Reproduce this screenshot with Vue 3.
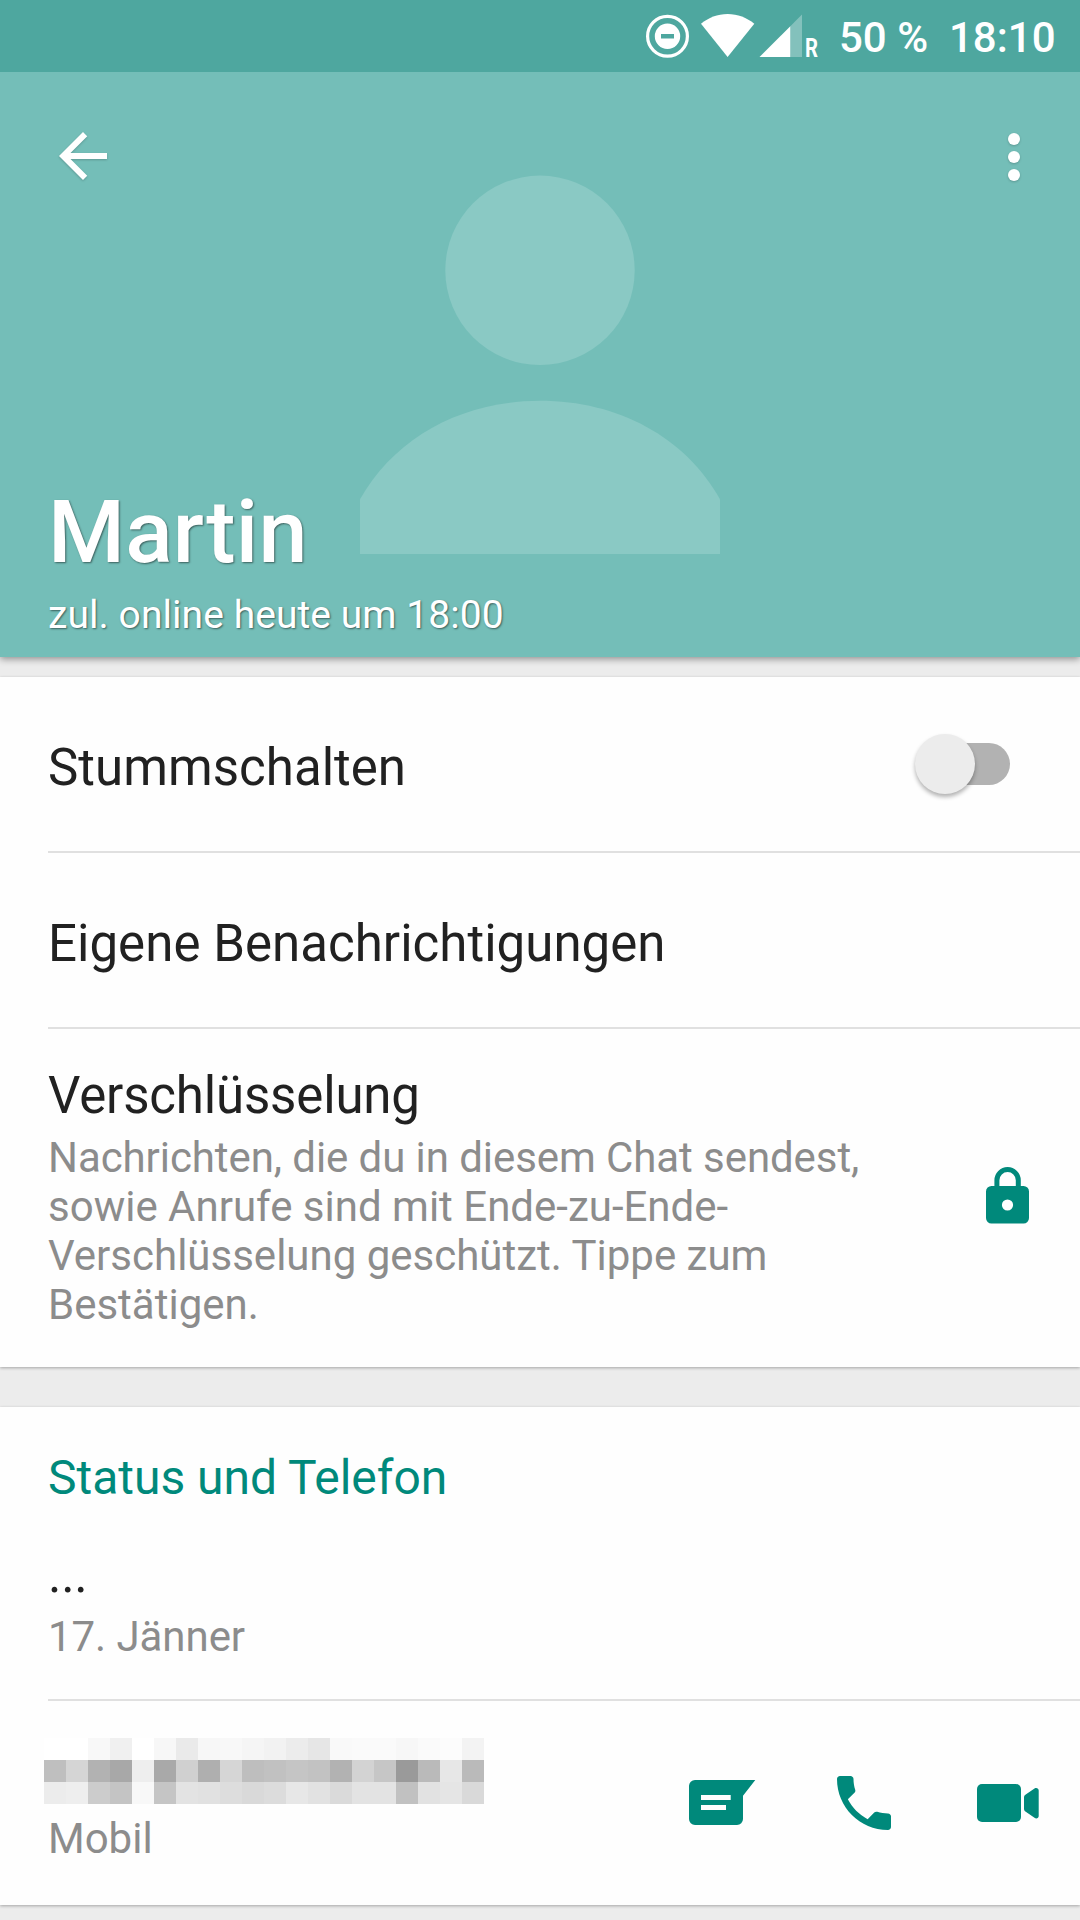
<template>
  <div class="contact">
    <div class="status-bar">
      <svg class="dnd" width="44" height="44" viewBox="0 0 44 44">
        <circle cx="21.5" cy="22.3" r="19.9" fill="none" stroke="#fff" stroke-width="3.2" />
        <path
          fill="#fff"
          fill-rule="evenodd"
          d="M21.5 9.6a12.7 12.7 0 1 0 0 25.4a12.7 12.7 0 1 0 0-25.4zM15 20h13v4.4H15z"
        />
      </svg>
      <svg class="wifi" width="54" height="44" viewBox="0 0 54 44">
        <path fill="#fff" d="M0 9.8C7.5 3.6 16.5 0 26.6 0S45.8 3.6 53.3 9.8L26.6 43z" />
      </svg>
      <svg class="signal" width="44" height="44" viewBox="0 0 44 44">
        <path fill="#fff" fill-opacity="0.3" d="M43 0.5V43H31.3V12.2z" />
        <path fill="#fff" d="M0.5 43L31.3 12.2V43z" />
      </svg>
      <svg class="roaming" width="18" height="54" viewBox="0 0 18 54">
        <text x="0" y="43" textLength="13" lengthAdjust="spacingAndGlyphs">R</text>
      </svg>
      <span class="battery">50 %</span>
      <span class="clock">18:10</span>
    </div>

    <header class="header">
      <svg class="avatar" width="360" height="380" viewBox="0 0 360 380">
        <circle cx="180" cy="95.3" r="94.7" />
        <path d="M0 324.3C35 262 102 225.8 180 225.8S325 262 360 324.3V379H0z" />
      </svg>
      <div class="toolbar">
        <svg class="tool" width="72" height="72" viewBox="0 0 24 24">
          <path d="M20 11H7.83l5.59-5.59L12 4l-8 8 8 8 1.41-1.41L7.83 13H20v-2z" />
        </svg>
        <svg class="tool" width="72" height="72" viewBox="0 0 72 72">
          <circle v-for="y in [19, 37, 55]" :key="y" cx="36" :cy="y" r="6" />
        </svg>
      </div>
      <div class="who">
        <h1>Martin</h1>
        <p>zul. online heute um 18:00</p>
      </div>
    </header>

    <section class="card settings">
      <div class="row" @click="muted = !muted">
        <span class="label">Stummschalten</span>
        <span class="switch" :class="{ on: muted }"><i></i></span>
      </div>
      <div class="row">
        <span class="label">Eigene Benachrichtigungen</span>
      </div>
      <div class="row encryption">
        <div>
          <div class="label">Verschlüsselung</div>
          <p class="sub">
            Nachrichten, die du in diesem Chat sendest,<br />sowie Anrufe sind mit Ende-zu-Ende-<br />Verschlüsselung
            geschützt. Tippe zum<br />Bestätigen.
          </p>
        </div>
        <svg class="lock" width="43" height="57" viewBox="0 0 43 57">
          <path fill="none" stroke="#00897b" stroke-width="5" d="M10.9 21V13.3a10.7 10.7 0 0 1 21.4 0V21" />
          <path
            fill="#00897b"
            fill-rule="evenodd"
            d="M5.5 19h32a5.5 5.5 0 0 1 5.5 5.5v26.5a5.5 5.5 0 0 1-5.5 5.5h-32a5.5 5.5 0 0 1-5.5-5.5V24.5a5.5 5.5 0 0 1 5.5-5.5zM21.5 32.4a5.6 5.6 0 1 0 0 11.2a5.6 5.6 0 1 0 0-11.2z"
          />
        </svg>
      </div>
    </section>

    <section class="card info">
      <div class="about">
        <h2>Status und Telefon</h2>
        <div class="label">...</div>
        <p class="sub">17. Jänner</p>
      </div>
      <div class="phone">
        <div class="number">
          <!-- 号码打码 -->
          <div class="mosaic">
            <i v-for="(g, i) in mosaic" :key="i" :style="{ background: gray(g) }"></i>
          </div>
          <p class="sub">Mobil</p>
        </div>
        <div class="actions">
          <svg width="72" height="72" viewBox="0 0 72 72">
            <path
              fill-rule="evenodd"
              d="M11 13H71.3L59 28.7V52a6 6 0 0 1-6 6H11a6 6 0 0 1-6-6V19a6 6 0 0 1 6-6zM17 28v5h29.7v-5zM17 38v5h25v-5z"
            />
          </svg>
          <svg width="72" height="72" viewBox="0 0 24 24">
            <path
              d="M6.62 10.79c1.44 2.83 3.76 5.14 6.59 6.59l2.2-2.2c.27-.27.67-.36 1.02-.24 1.12.37 2.33.57 3.57.57.55 0 1 .45 1 1V20c0 .55-.45 1-1 1-9.39 0-17-7.61-17-17 0-.55.45-1 1-1h3.5c.55 0 1 .45 1 1 0 1.25.2 2.45.57 3.57.11.35.03.74-.25 1.02l-2.2 2.2z"
            />
          </svg>
          <svg width="72" height="72" viewBox="0 0 72 72">
            <rect x="5" y="17" width="44" height="38" rx="5" />
            <path
              d="M53 28L62.5 21.5C64.5 20.3 66.7 21.5 66.7 23.5V49C66.7 51 64.5 52.2 62.5 50.8L53 44.2Q52 43.3 52 42V30.2Q52 28.8 53 28z"
            />
          </svg>
        </div>
      </div>
    </section>
  </div>
</template>

<script setup>
import { ref } from 'vue'

const muted = ref(false)

// 每个色块的灰度值，20 列 x 3 行
const mosaic = [
  255, 255, 248, 240, 255, 247, 234, 247, 248, 245, 242, 236, 230, 249, 250, 250, 247, 250, 252, 243,
  191, 213, 178, 168, 238, 169, 208, 175, 214, 190, 193, 197, 194, 178, 211, 198, 154, 186, 231, 186,
  236, 238, 204, 196, 248, 197, 227, 225, 221, 217, 220, 231, 226, 218, 227, 227, 193, 226, 229, 217
]
const gray = (g) => `rgb(${g},${g},${g})`
</script>

<style>
body {
  margin: 0;
  background: #ececec;
}
</style>

<style scoped>
.contact {
  width: 1080px;
  height: 1920px;
  overflow: hidden;
  background: #ececec;
  font-family: Roboto, 'Noto Sans', sans-serif;
  color: #212121;
}
svg {
  display: block;
  flex: none;
}
h1,
h2,
p {
  margin: 0;
  font-weight: 400;
}
.status-bar {
  position: relative;
  z-index: 1;
  display: flex;
  box-sizing: border-box;
  height: 72px;
  padding: 14px 0 0 646px;
  background: #4ea79f;
  color: #fff;
  font-size: 42px;
  font-weight: 500;
  line-height: 48px;
  white-space: nowrap;
}
.wifi {
  margin-left: 11px;
}
.signal {
  margin-left: 4px;
}
.roaming {
  margin-left: 2px;
}
.roaming text {
  fill: #fff;
  font-size: 26px;
  font-weight: 700;
}
.battery {
  width: 110px;
  margin-left: 16px;
}
.header {
  position: relative;
  display: flex;
  flex-direction: column;
  justify-content: space-between;
  box-sizing: border-box;
  height: 585px;
  padding: 48px 30px 18px 47px;
  background: #74beb8;
  box-shadow: 0 2px 7px rgba(0, 0, 0, 0.4);
  color: #fff;
}
.avatar {
  position: absolute;
  top: 103px;
  left: 360px;
  fill: #8ac9c4;
}
.toolbar {
  display: flex;
  justify-content: space-between;
}
.tool {
  fill: #fff;
  filter: drop-shadow(0 1px 1px rgba(0, 0, 0, 0.2));
}
.who {
  position: relative;
  margin-left: 1px;
  text-shadow: 1px 1px 2px rgba(0, 0, 0, 0.5);
}
.who h1 {
  font-size: 88px;
  font-weight: 500;
  letter-spacing: 0.2px;
  line-height: 100px;
}
.who p {
  margin-top: 9px;
  font-size: 39px;
  letter-spacing: 0.06px;
  line-height: 48px;
}
.card {
  background: #fefefe;
  box-shadow: 0 1px 3px rgba(0, 0, 0, 0.3);
}
.settings {
  margin-top: 20px;
}
.info {
  margin-top: 40px;
}
.row {
  display: flex;
  align-items: center;
  justify-content: space-between;
  height: 174px;
  margin-left: 48px;
  border-bottom: 2px solid #e0e0e0;
}
.label {
  font-size: 51px;
  line-height: 60px;
}
.row > .label {
  padding-top: 7px;
  letter-spacing: 0.03px;
}
.sub {
  color: #8c8c8c;
  font-size: 42px;
  line-height: 49px;
}
.encryption {
  align-items: flex-start;
  box-sizing: border-box;
  height: 338px;
  padding-top: 37px;
  border-bottom: none;
}
.encryption .label {
  letter-spacing: -0.17px;
}
.encryption .sub {
  margin-top: 7px;
}
.encryption .sub::first-line {
  letter-spacing: -0.08px;
}
.lock {
  margin: 101px 51px 0 0;
}
.switch {
  display: flex;
  align-items: center;
  width: 84px;
  height: 42px;
  margin-right: 70px;
  border-radius: 21px;
  background: #b2b2b2;
}
.switch i {
  flex: none;
  width: 60px;
  height: 60px;
  margin-left: -11px;
  border-radius: 50%;
  background: #ececec;
  box-shadow: 0 3px 4px rgba(0, 0, 0, 0.3);
}
.switch.on i {
  margin-left: 35px;
}
.about {
  box-sizing: border-box;
  height: 294px;
  margin-left: 48px;
  padding-top: 43px;
  border-bottom: 2px solid #e0e0e0;
}
.about h2 {
  margin-bottom: 39px;
  color: #00897b;
  font-size: 48px;
  letter-spacing: -0.02px;
  line-height: 56px;
}
.about .label {
  letter-spacing: -0.3px;
}
.about .sub {
  margin-top: 7px;
  letter-spacing: -0.06px;
}
.phone {
  display: flex;
  align-items: center;
  justify-content: space-between;
  height: 204px;
  padding: 0 36px 0 44px;
}
.number {
  padding-bottom: 5px;
}
.mosaic {
  display: grid;
  grid-template-columns: repeat(20, 22px);
  grid-auto-rows: 22px;
}
.number .sub {
  margin: 10px 0 0 4px;
}
.actions {
  display: flex;
  gap: 72px;
  fill: #00897b;
}
</style>
